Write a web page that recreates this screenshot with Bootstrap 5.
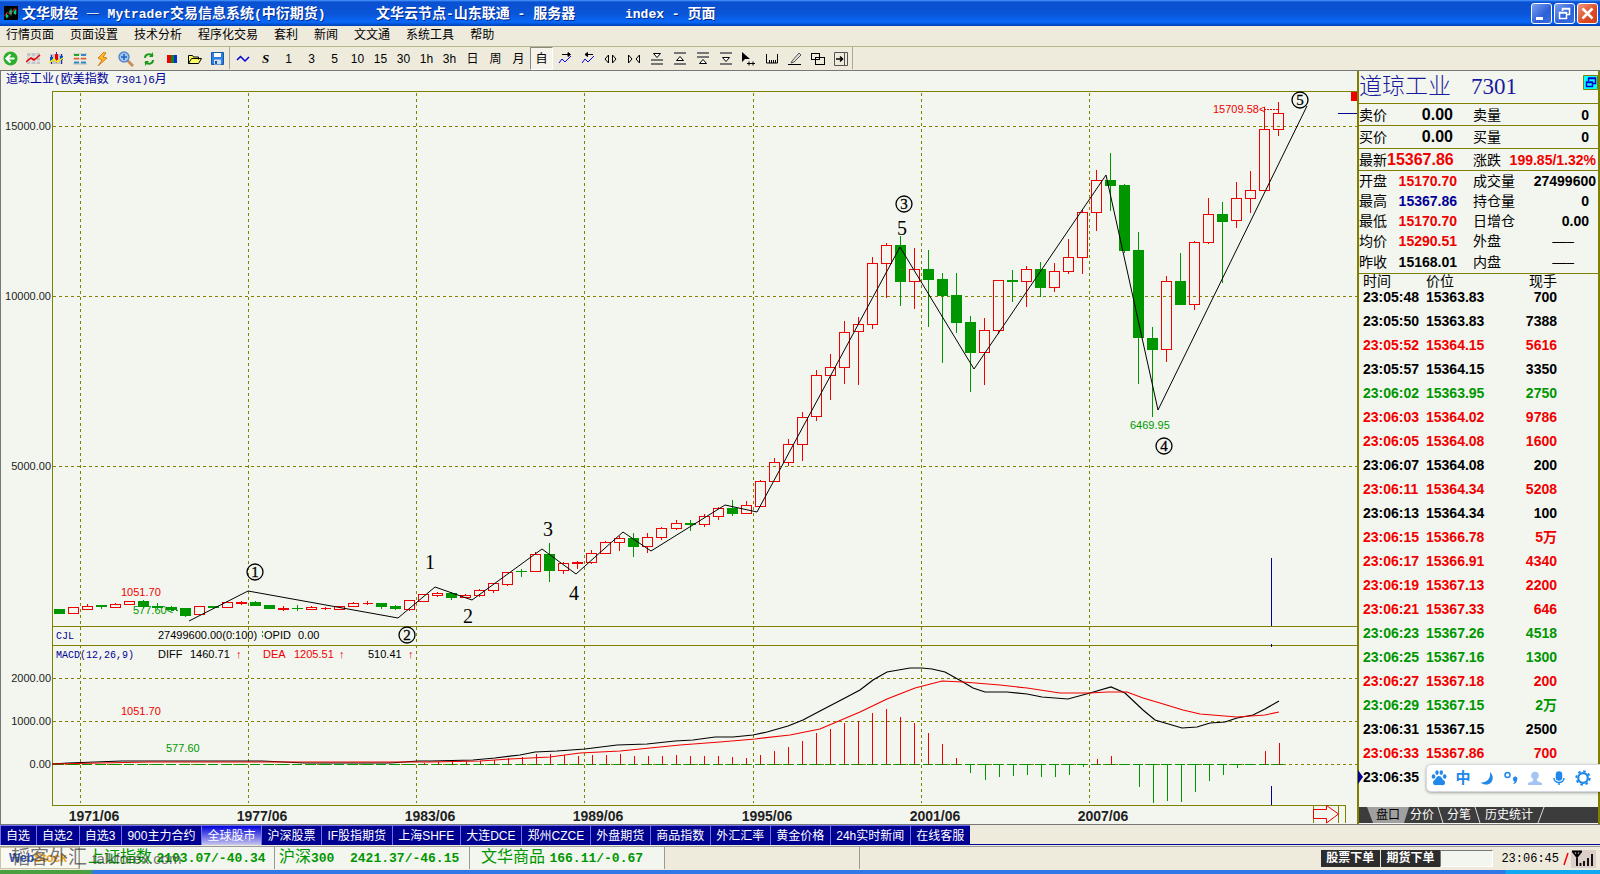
<!DOCTYPE html>
<html lang="zh-CN">
<head>
<meta charset="utf-8">
<meta name="viewport" content="width=device-width, initial-scale=1">
<title>文华财经 — Mytrader</title>
<link href="https://cdn.jsdelivr.net/npm/bootstrap@5.3.0/dist/css/bootstrap.min.css" rel="stylesheet">
<style>
:root{--paper:#f3f6ef;--face:#eeebdd;--olive:#808000;--up:#f00000;--down:#009600;--navy:#000096}
body{font:12px/16px "Liberation Sans","Noto Sans CJK SC",sans-serif;color:#000;background:var(--face);overflow-x:hidden}
button{font:inherit;color:inherit}
.titlebar{height:26px;color:#fff;font:bold 14px/24px "Noto Sans CJK SC",sans-serif;text-shadow:1px 1px 0 #002a90;
 background:linear-gradient(#4a9cff 0,#0a50d0 2px,#0a55d8 14px,#0868fa 22px,#0040b0 26px);white-space:pre}
.titlebar .lat{font-family:"Liberation Mono",monospace;font-size:13px}
.seg1{width:354px}.seg2{width:249px}
.winbtn{width:21px;height:21px;border:1px solid #fff;border-radius:3px;background:linear-gradient(135deg,#7ba0f0,#2c5fd8 60%,#3c70e0);padding:0;line-height:0}
.winbtn.shut{background:linear-gradient(135deg,#f0967c,#dd4a22 60%,#d04020)}
.menubar{height:21px;border-bottom:1px solid #b5b58c;background:var(--face)}
.menubar a{color:#000;text-decoration:none;line-height:18px}
.toolstrip{height:24px;background:var(--face);border-bottom:1px solid #777}
.tool{width:23px;height:23px;padding:0;border:0;background:none;font-size:12px;line-height:22px;flex:none;display:flex;align-items:center;justify-content:center}
.tool.down{border:1px solid;border-color:#888 #fff #fff #888;background:#f6f4ea}
.firstgroup{margin-left:-1px}
.vsep{width:2px;border-left:1px solid #aaa890;height:22px}
.chartpane{background:var(--paper);border-left:1px solid #777;min-width:0}
.charttitle{height:18px;line-height:16px;color:var(--navy);padding-left:5px;white-space:pre}
.charttitle span{font:11px/16px "Liberation Mono",monospace}
.chartpane svg{display:block;width:100%;height:auto}
.quote{width:243px;background:var(--paper);border-left:2px solid var(--olive);border-right:2px solid var(--olive)}
.qhead{height:33px;border-bottom:1px solid var(--olive);color:#1a1a9c;font:300 23px/31px "Liberation Serif","Noto Sans CJK SC",serif;white-space:pre}
.qtab{table-layout:fixed;width:100%;border-collapse:separate;border-spacing:0;font-size:14px;line-height:18px}
.qtab td,.qtab th{padding:0;height:20px;white-space:nowrap;font-weight:400}
.qtab .ruled>*{height:22px;border-bottom:1px solid var(--olive)}
.qtab .lastrow>*{height:23px}
.qtab td{text-align:right;font-weight:700;padding-right:16px}
.qtab td:last-child{padding-right:2px}
.qtab td.z:last-child{padding-right:9px}
.qtab td.dash{padding-right:24px;font-weight:400}
.qtab td.dash:last-child{padding-right:24px}
.qtab td.big{font-size:16px;padding-right:20px}
.up{color:var(--up)}.dn{color:var(--down)}.nv{color:var(--navy)}
.ticks{table-layout:fixed;width:198px;border-collapse:separate;border-spacing:0;font-size:14px;line-height:14px}
.ticks td,.ticks th{padding:0;height:24px;vertical-align:top;font-weight:700}
.ticks th{font-weight:400;height:16px}
.ticks td:first-child,.ticks th:first-child{padding-left:4px}
.ticks td:last-child,.ticks th:last-child{text-align:right}
.ticks .latest td:first-child{position:relative}
.ticks .latest td:first-child::before{content:"";position:absolute;left:-1px;top:0;border:7px solid transparent;border-left:5px solid var(--navy);border-right:0}
.quotetabs{height:16px;background:#3c3c3c;color:#fff;line-height:15px;margin-top:auto;margin-bottom:1px}
.quotetabs button{border:0;background:none;padding:0;height:16px;line-height:15px}
.quotetabs .on{background:#a0a0a0;color:#000;width:42px;margin-left:8px;clip-path:polygon(0 0,100% 0,37px 100%,6px 100%)}
.ime{position:absolute;left:67px;right:-3px;bottom:32px;height:28px;background:#fff;border:1px solid #d8d8e0;border-radius:5px 0 0 5px;box-shadow:0 1px 3px #0005}
.ime button{border:0;background:none;padding:0;width:24px;height:24px;color:#2088ea;font-size:15px;font-weight:700;display:flex;align-items:center;justify-content:center}
.booktabs{height:22px;border-top:1px solid #777;background:linear-gradient(var(--face) 19px,#000096 19px,#000096 20px,var(--face) 20px)}
.booktabs button{height:20px;padding:0 6px 0 5px;border:0;border-left:1px solid #7070f0;border-top:1px solid #7070f0;background:#000090;color:#fff;line-height:18px;white-space:nowrap;flex:none}
.booktabs button.on{background:linear-gradient(#0000dc,#c8c8ee)}
.statusbar{height:24px;background:var(--face);border-top:1px solid #999}
.cell{height:22px;width:195px;flex:none;background:var(--paper);border-left:1px solid #999;color:var(--down);font-size:16px;line-height:20px;white-space:pre}
.cell.bare{background:var(--face)}
.cell b{font-family:"Liberation Mono",monospace;font-size:13px}
.logo{width:79px;height:22px;flex:none;background:#fbfaf2;border:1px solid #c8c4a8;line-height:20px}
.stamp{position:absolute;left:11px;top:0;z-index:2;color:#333a;font-size:19px;line-height:22px;white-space:nowrap}
.stamp span{font-size:15px}
.order{height:17px;border:0;background:#2c2c2c;color:#fff;font-weight:700;padding:0 6px 0 5px;line-height:15px}
.order+.order{margin-left:1px}
.codebox{width:53px;height:17px;border:1px solid;border-color:#777 #fff #fff #777;background:var(--paper);padding:0}
.clock{font:12px/16px "Liberation Mono","Noto Sans CJK SC",monospace}
.taskline{flex:1 0 4px;background:linear-gradient(90deg,#4aa040 0,#4aa040 90px,#3078e8 94px,#3078e8 calc(100% - 95px),#10a8f0 calc(100% - 94px))}
</style>
</head>
<body class="d-flex flex-column min-vh-100">
<header>
 <div class="titlebar d-flex align-items-center">
  <svg class="ms-1 me-1 flex-shrink-0" width="14" height="16" viewBox="0 0 16 16"><path d="M0 0h16v16H0z" fill="#000"/><path d="M3 8v6M8 3v8M13 4v6" stroke="#0d9" stroke-width="1"/><path d="M2 10h3v3H2zM6 5h3v4H6zM11 5h3v4h-3z" fill="#0c8"/><path d="M0 12l4-5 3 3 5-7 3 2" stroke="#f22" fill="none"/></svg>
  <div class="seg1">文华财经<span class="lat"> </span>—<span class="lat"> Mytrader</span>交易信息系统<span class="lat">(</span>中衍期货<span class="lat">)</span></div>
  <div class="seg2">文华云节点<span class="lat">-</span>山东联通<span class="lat"> - </span>服务器</div>
  <div><span class="lat">index - </span>页面</div>
  <div class="d-flex ms-auto" style="gap:2px;margin-right:2px">
   <button class="winbtn" aria-label="最小化"><svg width="19" height="19"><path d="M4 13h7v3H4z" fill="#fff"/></svg></button>
   <button class="winbtn" aria-label="还原"><svg width="19" height="19" fill="none" stroke="#fff"><path d="M7.500 7V4.500h7v6H12M7 5h8M4.500 8.500h7v6h-7zM4 9h8" stroke-width="1.500"/></svg></button>
   <button class="winbtn shut" aria-label="关闭"><svg width="19" height="19"><path d="M4.500 4.500l10 10M14.500 4.500l-10 10" stroke="#fff" stroke-width="2.500"/></svg></button>
  </div>
 </div>
 <nav class="menubar d-flex gap-3 px-1"><a href="#" style="margin-left:2px">行情页面</a><a href="#">页面设置</a><a href="#">技术分析</a><a href="#">程序化交易</a><a href="#">套利</a><a href="#">新闻</a><a href="#">文文通</a><a href="#">系统工具</a><a href="#">帮助</a></nav>
 <div class="toolstrip d-flex" role="toolbar">
  <div class="d-flex firstgroup">
   <button class="tool" aria-label="后退"><svg width="15" height="15"><circle cx="7.500" cy="7.500" r="7" fill="#2cae2c"/><path d="M11.500 7.500H4M7.500 3.500l-4 4 4 4" stroke="#fff" stroke-width="2.200" fill="none"/></svg></button>
   <button class="tool" aria-label="走势"><svg width="16" height="14"><path d="M1 1h13v11H1z" fill="#c4c4c4"/><path d="M1 5h13M1 9h13M5 1v11M10 1v11" stroke="#eee"/><path d="M0 10l5-4 3 2 6-5" stroke="#e00" stroke-width="1.600" fill="none"/></svg></button>
   <button class="tool" aria-label="K线"><svg width="15" height="14"><path d="M1 2h13v10H1z" fill="#c4c4c4"/><path d="M2.500 3v9M7.500 0v11M12.500 2v10" stroke="#22c"/><path d="M1 5h3v4H1zM11 4h3v4h-3z" fill="#05c"/><path d="M6 2h3v6H6z" fill="#e00"/><path d="M0 11l5-4 3 3 6-4" stroke="#fe0" stroke-width="1.500" fill="none"/></svg></button>
   <button class="tool" aria-label="报价"><svg width="14" height="12"><path d="M0 1h14M0 11h14M0 6h14" stroke="#b8b8b8"/><path d="M1 2h5" stroke="#2a2" stroke-width="2"/><path d="M1 5.500h5M8 5.500h5" stroke="#e52" stroke-width="1.500"/><path d="M1 9.500h5M8 9.500h5M8 2h5" stroke="#38c" stroke-width="2"/></svg></button>
   <button class="tool" aria-label="闪电下单"><svg width="13" height="14"><path d="M8 0L2 6l4 2-4 6 9-8-4-1 3-4z" fill="#fb2" stroke="#c60" stroke-width=".8"/></svg></button>
   <button class="tool" aria-label="放大"><svg width="16" height="16"><path d="M9 9l6 6" stroke="#c98f5a" stroke-width="3"/><circle cx="6" cy="6" r="5" fill="#9cc8f4" stroke="#5b86c4" stroke-width="1.400"/><path d="M3 6h6M6 3v6" stroke="#235fc0" stroke-width="1.500"/></svg></button>
   <button class="tool" aria-label="刷新"><svg width="12" height="14" fill="none" stroke="#1a9a1a" stroke-width="2"><path d="M2 6c0-4 5-5 8-2M10 8c0 4-5 5-8 2"/><path d="M10 0v5H6zM2 14V9h4z" fill="#1a9a1a" stroke="none"/></svg></button>
   <button class="tool" aria-label="颜色"><svg width="10" height="8"><path d="M0 0h4v8H0z" fill="#e00"/><path d="M4 0h3v8H4z" fill="#082"/><path d="M7 0h3v8H7z" fill="#03c"/></svg></button>
   <button class="tool" aria-label="打开"><svg width="16" height="12" fill="#ff6" stroke="#000"><path d="M1.500 10.500v-8h4l1 1.500h5v2.500M1.500 10.500l3-5h10l-3 5z"/></svg></button>
   <button class="tool" aria-label="保存"><svg width="13" height="13"><path d="M.5.500h12v12H.5z" fill="#2f7de0" stroke="#1558b0"/><path d="M3 1h7v4H3z" fill="#fff"/><path d="M3 7.500h7v5H3z" fill="#cde"/><path d="M4 9h2v3H4z" fill="#1558b0"/></svg></button>
  </div>
  <div class="vsep"></div>
  <button class="tool" aria-label="分时"><svg width="14" height="8"><path d="M1 5l3.500-3.500L9 6l4-4" stroke="#00d" stroke-width="1.500" fill="none"/></svg></button>
  <button class="tool"><b style="font:italic bold 13px 'Liberation Serif',serif">S</b></button><button class="tool">1</button><button class="tool">3</button><button class="tool">5</button><button class="tool">10</button><button class="tool">15</button><button class="tool">30</button><button class="tool">1h</button><button class="tool">3h</button><button class="tool">日</button><button class="tool">周</button><button class="tool">月</button><button class="tool down">自</button>
  <button class="tool" aria-label="右移"><svg width="14" height="13" fill="none"><path d="M1 11l3-4 3 3 6-6" stroke="#00e"/><path d="M4 2.500h8M10 .5l2.500 2L10 4.500z" stroke="#000" fill="#000"/></svg></button>
  <button class="tool" aria-label="左移"><svg width="14" height="13" fill="none"><path d="M1 11l3-4 3 3 6-6" stroke="#00e"/><path d="M12 2.500H4M6.500.5L4 2.500l2.500 2z" stroke="#000" fill="#000"/></svg></button>
  <button class="tool" aria-label="拉宽"><svg width="13" height="10" fill="none" stroke="#000"><path d="M4.500 1v8L1 5zM8.500 1v8L12 5z"/></svg></button>
  <button class="tool" aria-label="收窄"><svg width="14" height="10" fill="none" stroke="#000"><path d="M1.500 1v8L5 5zM12.500 1v8L9 5z"/></svg></button>
  <button class="tool" aria-label="标记一"><svg width="12" height="13"><path d="M2.500 1.500h7L6 5.500z" fill="#fff" stroke="#000"/><path d="M0 8h12M0 12h12" stroke="#777" stroke-width="2"/></svg></button>
  <button class="tool" aria-label="标记二"><svg width="12" height="13"><path d="M2.500 8.500h7L6 4.500z" fill="#fff" stroke="#000"/><path d="M0 1h12M0 12h12" stroke="#777" stroke-width="2"/></svg></button>
  <button class="tool" aria-label="标记三"><svg width="12" height="13"><path d="M2.500 11.500h7L6 7.500z" fill="#fff" stroke="#000"/><path d="M0 1h12M0 5h12" stroke="#777" stroke-width="2"/></svg></button>
  <button class="tool" aria-label="标记四"><svg width="12" height="13"><path d="M2.500 5.500h7L6 9.500z" fill="#fff" stroke="#000"/><path d="M0 1h12M0 12h12" stroke="#777" stroke-width="2"/></svg></button>
  <button class="tool" aria-label="选择"><svg width="15" height="14"><path d="M1 0v10l3-3 5 0z"/><path d="M6 11.500h8M8 9.500v4M12 9.500v4" stroke="#000"/></svg></button>
  <button class="tool" aria-label="标尺"><svg width="12" height="11" fill="none" stroke="#000"><path d="M.5 1v9h11V1M3.500 7v3M5.500 7v3M7.500 7v3M9.500 7v3"/></svg></button>
  <button class="tool" aria-label="画线"><svg width="14" height="13" fill="none"><path d="M4 9l7-8 2 2-7 7-3 1z" stroke="#555" fill="#ddd"/><path d="M0 12.500h13" stroke="#000"/></svg></button>
  <button class="tool" aria-label="叠加"><svg width="15" height="12" fill="none" stroke="#000" shape-rendering="crispEdges"><path d="M1.500.500h8v6h-8zM5.500 4.500h9v7h-9z"/></svg></button>
  <button class="tool" aria-label="隐藏侧栏"><svg width="14" height="14" fill="none" stroke="#555"><path d="M.5.500h13v13H.5zM10.500 1v13"/><path d="M2 7h6M6 4.500L8.500 7 6 9.500" stroke="#000" stroke-width="1.500"/></svg></button>
  <div class="vsep"></div>
 </div>
</header>

<main class="d-flex">
 <section class="chartpane flex-fill">
  <div class="charttitle">道琼工业<span>(</span>欧美指数<span> 7301)6</span>月</div>
  <svg id="chart" viewBox="1 89 1356 735" font-family="'Liberation Sans','Noto Sans CJK SC',sans-serif" font-size="11" fill="none">
   <g stroke="#808000" shape-rendering="crispEdges">
    <path d="M52.500 805V91.500H1357M52 626.500h1305M52 645.500h1305M52 805.500h1293M1313.500 805v18M1338.500 805v18M1345.500 805v18"/>
    <path stroke-dasharray="3 3" d="M80.500 93v710M248.500 93v710M416.500 93v710M584.500 93v710M753.500 93v710M921.500 93v710M1089.500 93v710M53 126.500h1304M53 296.500h1304M53 466.500h1304M53 678.500h1304M53 721.500h1304M53 764.500h1304"/>
   </g>
   <g id="bars" shape-rendering="crispEdges"></g>
   <path stroke="#000" stroke-width="1.200" d="M52 764l16-1 27-1 27-1h43l70 0h27l43 2h85l28-2 13 0 42-1 22-2 25-3 15-3 22-1 28-2 32-4 30-1 28-3 18-1 22-3h18l20-2 14-3 21-6 15-6 17-9 23-12 17-9 13-10 14-8 23-4h12l10 1 13 3 18 10 10 6 12 4h22l20 2 15 3 26 2 22-6 21-6 14 6 18 17 12 10 27 8 15-1 13-4 15-1 12-4 16-3 12-6 14-8"/>
   <polyline stroke="#f00000" stroke-width="1.200" points="52,764 100,763 150,762 430,762 480,761 510,759 550,757 580,753 620,751 650,748 680,745 720,742 755,739 790,735 820,729 860,712 887,699 915,688 942,681 963,682 1000,685 1027,688 1060,693 1090,693 1107,692 1127,692 1143,698 1160,703 1183,710 1200,714 1237,717 1265,715 1279,712"/>
   <polyline stroke="#000" points="189,621 248,591 398,618 435,587 472,600 542,549 576,574 623,532 651,551 725,505 757,512 900,247 974,369 1106,175 1158,410 1307,106"/>
   <g shape-rendering="crispEdges"><path stroke="#000096" d="M1271.500 558v68M1271.500 644v3M1271.500 786v19M1338 113.500h19"/><path fill="#f00000" d="M1351 92h6v9h-6z"/></g>
   <path stroke="#f00000" d="M1313.500 809.500h13v-4l12 8.500-12 9v-4.500h-13z"/><path stroke="#f00000" stroke-dasharray="2 1" d="M1264 109.500h14"/>
   <g id="names" fill="#222"></g>
   <g fill="#f00000"><text x="1213" y="113">15709.58&lt;</text><text x="121" y="596">1051.70</text><text x="121" y="715">1051.70</text><text x="236" y="658">↑</text><text x="263" y="658">DEA</text><text x="294" y="658">1205.51</text><text x="339" y="658">↑</text><text x="408" y="658">↑</text></g>
   <g fill="#009600"><text x="133" y="614">577.60&lt;</text><text x="166" y="752">577.60</text><text x="1130" y="429">6469.95</text><path stroke="#009600" stroke-dasharray="2 2" d="M172 610.500h10M262.500 631v8"/></g>
   <g fill="#000096" font-family="'Liberation Mono',monospace" font-size="10"><text x="56" y="639">CJL</text><text x="56" y="658">MACD(12,26,9)</text></g>
   <g fill="#000"><text x="158" y="639">27499600.00(0:100)</text><text x="264" y="639">OPID</text><text x="298" y="639">0.00</text><text x="158" y="658">DIFF</text><text x="190" y="658">1460.71</text><text x="368" y="658">510.41</text></g>
  </svg>
 </section>

 <aside class="quote position-relative d-flex flex-column">
  <div class="qhead d-flex">道琼工业<span style="margin-left:20px">7301</span>
   <button class="ms-auto p-0 border-0 bg-transparent lh-1 align-self-start" aria-label="还原窗口"><svg class="d-block mt-1" width="15" height="15"><path d="M.5.500h14v14H.5z" fill="#0ff" stroke="#808000"/><path d="M5.500 6V3.500h7v5H10M3.500 7.500h6v4h-6zM5 3h8M3 7h7" fill="none" stroke="#00c" stroke-width="1.500"/></svg></button></div>
  <table class="qtab">
   <colgroup><col style="width:28px"><col style="width:86px"><col style="width:36px"><col></colgroup>
   <tr class="ruled"><th>卖价</th><td class="big">0.00</td><th>卖量</th><td class="z">0</td></tr>
   <tr class="ruled lastrow"><th>买价</th><td class="big">0.00</td><th>买量</th><td class="z">0</td></tr>
   <tr class="ruled"><th>最新</th><td class="big up">15367.86</td><th>涨跌</th><td class="up">199.85/1.32%</td></tr>
   <tr><th>开盘</th><td class="up">15170.70</td><th>成交量</th><td>27499600</td></tr>
   <tr><th>最高</th><td class="nv">15367.86</td><th>持仓量</th><td class="z">0</td></tr>
   <tr><th>最低</th><td class="up">15170.70</td><th>日增仓</th><td class="z">0.00</td></tr>
   <tr><th>均价</th><td class="up">15290.51</td><th>外盘</th><td class="dash">—–</td></tr>
   <tr class="ruled lastrow"><th>昨收</th><td>15168.01</td><th>内盘</th><td class="dash">—–</td></tr>
  </table>
  <table class="ticks"><colgroup><col style="width:67px"><col style="width:68px"><col></colgroup>
   <thead><tr><th>时间</th><th>价位</th><th>现手</th></tr></thead><tbody id="ticks"></tbody></table>
  <div class="ime d-flex align-items-center">
   <button aria-label="输入法"><svg width="16" height="16" fill="#2088ea"><ellipse cx="2.500" cy="6.500" rx="1.800" ry="2.200"/><ellipse cx="6" cy="2.600" rx="1.700" ry="2.300"/><ellipse cx="10.300" cy="2.600" rx="1.700" ry="2.300"/><ellipse cx="13.700" cy="6.500" rx="1.800" ry="2.200"/><path d="M8 6c2.500 0 3 3 5 4.500s1 5-1.500 4.700S8 15 8 15s-1.500 0-3.500.2S1 12 3 10.500 5.500 6 8 6z"/></svg></button>
   <button>中</button>
   <button aria-label="月亮"><svg width="14" height="14" fill="#2088ea"><path d="M10 1c6 6 1 13-4 12.500C4 13.500 2 13 1 11.500 7 12 11 7 10 1z"/></svg></button>
   <button aria-label="标点"><svg width="14" height="14"><circle cx="3.500" cy="4" r="2.500" fill="none" stroke="#2088ea" stroke-width="1.500"/><path d="M9 8a2.200 2.200 0 1 1 4 1c0 2-1.500 4-4 4 1-1 1.500-1.500 1.500-2.500C9.500 10.500 9 9 9 8z" fill="#2088ea"/></svg></button>
   <button aria-label="用户"><svg width="14" height="15" fill="#a3c5f3"><circle cx="7" cy="4.500" r="3.800"/><path d="M5 8h4v2l5 2v2H0v-2l5-2z"/></svg></button>
   <button aria-label="语音"><svg width="12" height="15" fill="none" stroke="#2088ea" stroke-width="1.500"><rect x="3.500" y="1" width="5" height="8" rx="2.500" fill="#2088ea"/><path d="M1 7c0 6 10 6 10 0M6 11v3"/></svg></button>
   <button aria-label="设置"><svg width="16" height="16" fill="none" stroke="#2088ea"><circle cx="8" cy="8" r="4.800" stroke-width="2.200"/><circle cx="8" cy="8" r="6.700" stroke-width="2" stroke-dasharray="2.600 2.660"/></svg></button>
  </div>
  <div class="quotetabs d-flex">
   <button class="on">盘口</button><button style="margin-left:1px">分价</button>
   <svg width="13" height="16"><path d="M4 0l5 16" stroke="#ddd"/></svg><button>分笔</button>
   <svg width="14" height="16"><path d="M4 0l5 16" stroke="#ddd"/></svg><button>历史统计</button>
   <svg width="14" height="16"><path d="M11 0L5 16" stroke="#ddd"/></svg>
  </div>
 </aside>
</main>

<footer class="d-flex flex-column flex-fill">
 <div class="booktabs d-flex" role="tablist"><button>自选</button><button>自选2</button><button>自选3</button><button>900主力合约</button><button class="on">全球股市</button><button>沪深股票</button><button>IF股指期货</button><button>上海SHFE</button><button>大连DCE</button><button>郑州CZCE</button><button>外盘期货</button><button>商品指数</button><button>外汇汇率</button><button>黄金价格</button><button>24h实时新闻</button><button>在线客服</button></div>
 <div class="statusbar d-flex position-relative">
  <div class="stamp">韬客外汇 <span>talkforex.com</span></div>
  <div class="logo ps-2 fw-bold"><span style="color:#3050b0">Web</span><span style="color:#e8a020">Stock</span></div>
  <div class="cell ps-2">上证指数 <b>2103.07/-40.34</b></div>
  <div class="cell ps-1">沪深<b>300  2421.37/-46.15</b></div>
  <div class="cell" style="padding-left:11px">文华商品 <b>166.11/-0.67</b></div>
  <div class="cell bare"></div><div class="cell bare"></div>
  <div class="d-flex align-items-center ms-auto">
   <button class="order">股票下单</button><button class="order">期货下单</button>
   <input class="codebox" aria-label="代码"><span class="clock ps-2">23:06:45</span>
   <svg class="ms-1" width="8" height="16"><path d="M1 14L5 2" stroke="#f00" stroke-width="1.500"/></svg>
   <svg class="me-1" width="25" height="18"><path d="M0 0h25v18H0z" fill="#dccfc9"/><path d="M1 1.500h10M2 2l4 5 4-5M6 2v14M9.500 16v-3M13 16v-5M17 16V8M21 16V4" stroke="#000" stroke-width="1.800" fill="none"/></svg>
  </div>
 </div>
 <div class="taskline"></div>
</footer>
<script src="https://cdn.jsdelivr.net/npm/bootstrap@5.3.0/dist/js/bootstrap.bundle.min.js"></script>
<script>
// one candle per entry: direction, high, body top, body bottom, low
const candles = `g609,609,614,614 r607,607,613,613 r604,606,609,610 g605,605,607,609 r603,604,607,608 r601,601,604,605 g600,601,607,608 g603,606,608,609 g606,607,610,611 g608,608,616,617 r606,606,614,614 g606,606,608,608 r601,602,607,608 r601,602,603,605 g601,602,606,606 g605,605,609,609 r606,608,609,611 g605,608,609,611 r606,607,609,609 r607,608,608,610 r606,606,609,609 r602,603,606,607 r601,603,603,605 g603,603,607,609 g605,606,609,610 r600,600,609,611 r594,594,601,602 r592,593,595,597 g592,593,598,600 r594,595,597,598 r589,590,595,597 r583,583,590,593 r572,572,584,586 g569,571,572,577 r552,554,571,572 g543,554,571,582 r562,563,570,574 r561,562,563,569 r550,553,562,564 r541,542,553,554 r536,538,542,551 g533,538,547,557 r533,537,546,553 r527,528,537,540 r520,523,528,530 g520,523,525,531 r514,516,524,527 r507,508,516,520 g500,508,514,516 r501,505,513,514 r480,481,506,507 r458,462,481,482 r439,444,462,466 r412,417,444,461 r370,375,416,421 r354,367,375,400 r321,332,367,384 r317,324,331,385 r257,263,324,329 r243,245,263,298 g236,245,282,306 r248,269,281,309 g250,269,280,327 g273,279,296,363 g273,295,323,333 g316,322,353,392 r318,330,352,385 r280,280,330,334 g270,280,282,302 r266,269,281,307 g262,269,288,297 r263,271,287,292 r239,257,271,274 r209,212,257,274 r170,180,212,231 g153,180,186,211 g184,185,251,253 g232,250,338,384 g327,338,350,417 r276,281,349,362 g253,281,305,305 r241,242,304,310 r198,214,242,244 g202,214,222,283 r182,198,220,228 r171,190,198,213 r107,129,190,190 r102,113,129,136`.split(' ');
// end of each MACD bar, from the second half of the 1982 cycle on; zero is 764
const macd = [763,762,761,761,761,760,758,757,754,754,755,756,755,755,754,756,756,756,755,756,756,756,757,758,755,751,747,741,733,729,723,721,713,709,717,723,733,744,758,773,780,777,776,775,777,777,775,767,759,756,764,787,803,801,802,792,781,775,768,764,751,743];
const up = '#f00000', down = '#009600';
let s = '';
candles.forEach((c, i) => {
  const [h, t, b, l] = c.slice(1).split(',').map(Number), x = 59 + 14 * i + (i > 43 ? 1 : 0);
  s += c[0] === 'g'
    ? `<path stroke="${down}" d="M${x + .5} ${h}V${l}"/><path fill="${down}" d="M${x - 5} ${t}h11V${b}h-11z"/>`
    : `<path stroke="${up}" d="M${x + .5} ${h}V${t}M${x + .5} ${b}V${l}M${x - 4.5} ${t + .5}h10V${b + .5}h-10z"/>`;
  s += `<path stroke="${down}" d="M${x - 5} 764.500h10"/>`;
  if (i > 25) {
    const y = macd[i - 26], m = x + (i < 44 || i > 65 ? 1 : 0);
    s += `<path stroke="${y < 764 ? up : down}" d="M${m + .5} 765V${y}"/>`;
  }
});
document.getElementById('bars').innerHTML = s;

let n = '';
[['15000.00', 130], ['10000.00', 300], ['5000.00', 470], ['2000.00', 682], ['1000.00', 725], ['0.00', 768]]
  .forEach(([t, y]) => n += `<text x="51" y="${y}" text-anchor="end">${t}</text>`);
[[1971, 94], [1977, 262], [1983, 430], [1989, 598], [1995, 767], [2001, 935], [2007, 1103]]
  .forEach(([t, x]) => n += `<text x="${x}" y="821" text-anchor="middle" font-size="14" font-weight="700">${t}/06</text>`);
n += '<g font-family="Liberation Serif,serif" text-anchor="middle" fill="#000">';
[[1, 430, 562], [2, 468, 616], [3, 548, 529], [4, 574, 593], [5, 902, 228]]
  .forEach(([t, x, y]) => n += `<text x="${x}" y="${y + 7}" font-size="20">${t}</text>`);
[[1, 255, 572], [2, 407, 635], [3, 904, 204], [4, 1164, 446], [5, 1300, 100]]
  .forEach(([t, x, y]) => n += `<circle cx="${x}" cy="${y}" r="8" fill="none" stroke="#000" stroke-width="1.300"/><text x="${x}" y="${y + 5}" font-size="15" stroke="#000" stroke-width=".3">${t}</text>`);
document.getElementById('names').innerHTML = n + '</g>';

const ticks = `05:48 63.83 700 k|05:50 63.83 7388 k|05:52 64.15 5616 up|05:57 64.15 3350 k|06:02 63.95 2750 dn|06:03 64.02 9786 up|06:05 64.08 1600 up|06:07 64.08 200 k|06:11 64.34 5208 up|06:13 64.34 100 k|06:15 66.78 5万 up|06:17 66.91 4340 up|06:19 67.13 2200 up|06:21 67.33 646 up|06:23 67.26 4518 dn|06:25 67.16 1300 dn|06:27 67.18 200 up|06:29 67.15 2万 dn|06:31 67.15 2500 k|06:33 67.86 700 up`;
document.getElementById('ticks').innerHTML = ticks.split('|').map(r => {
  const [t, p, v, c] = r.split(' ');
  return `<tr class="${c}"><td>23:${t}</td><td>153${p}</td><td>${v}</td></tr>`;
}).join('') + '<tr class="latest"><td>23:06:35</td><td></td><td></td></tr>';
</script>
</body>
</html>
